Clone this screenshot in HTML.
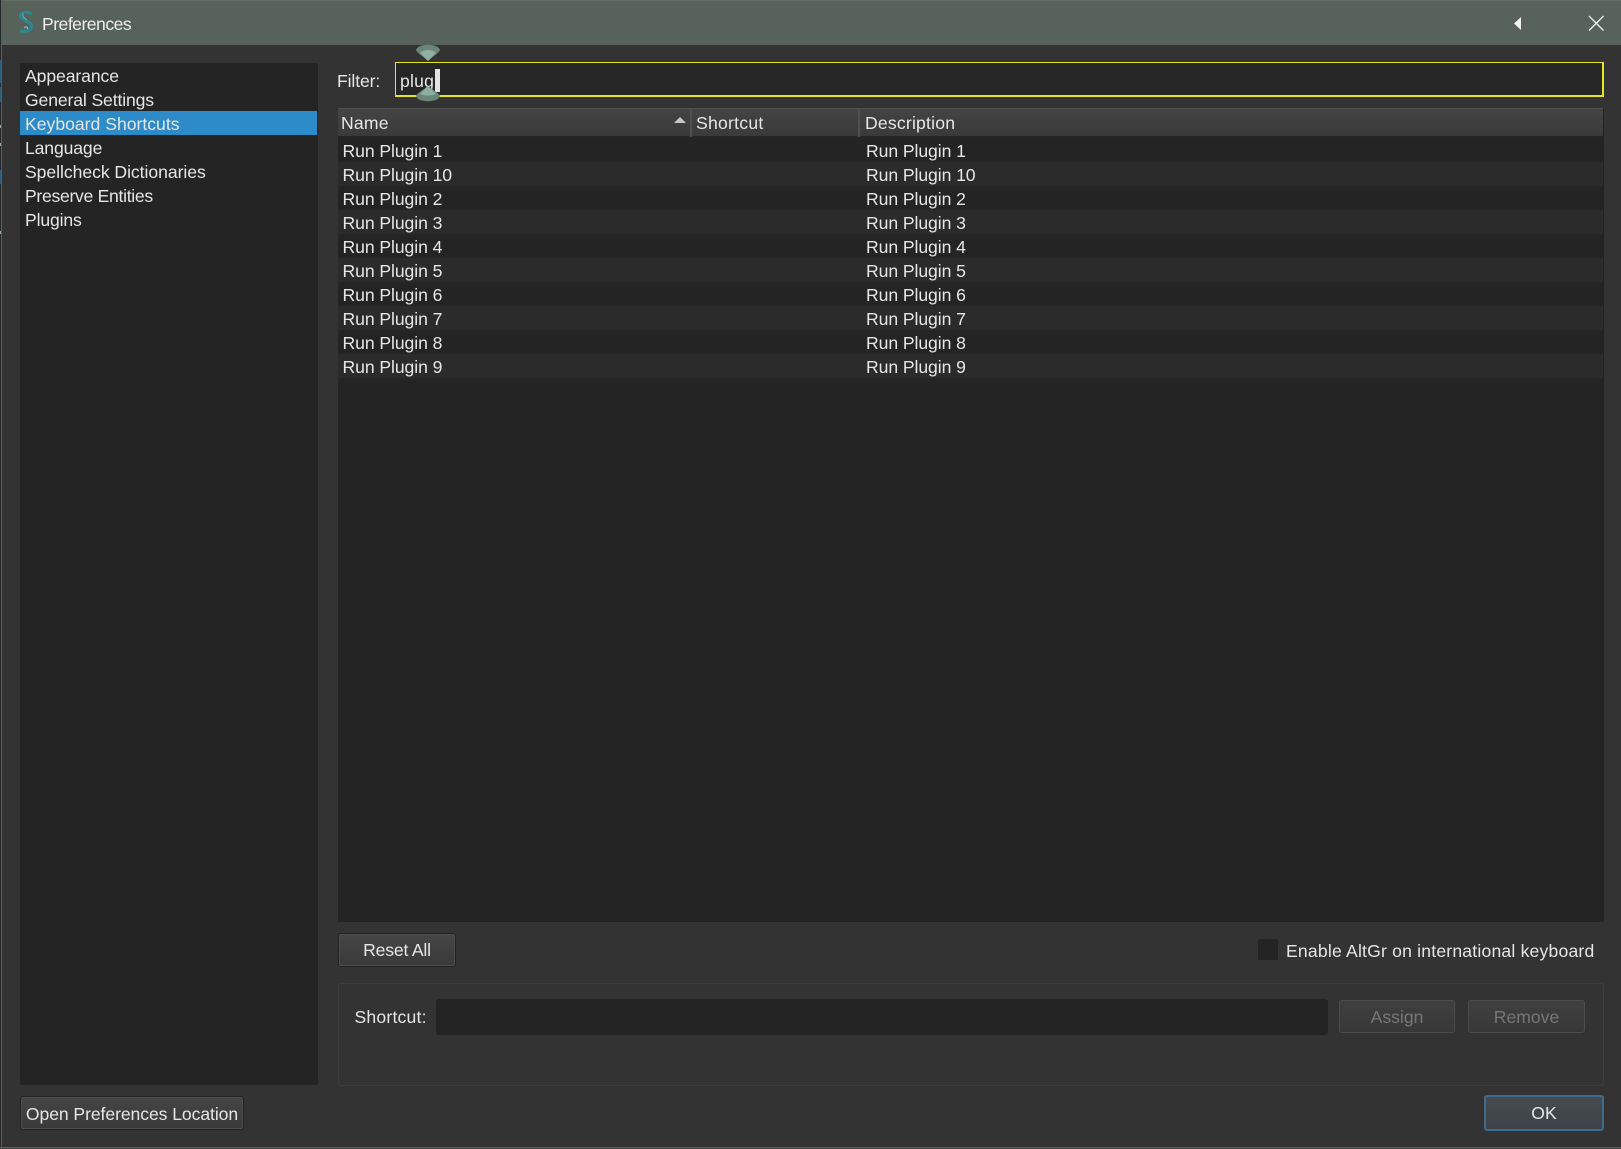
<!DOCTYPE html>
<html lang="en"><head><meta charset="utf-8"><title>Preferences</title>
<style>
html,body{margin:0;padding:0;background:#333}
body{width:1621px;height:1149px;position:relative;overflow:hidden;font-family:"Liberation Sans",sans-serif;font-size:17.6px;color:#e6e6e6}
.a{position:absolute;box-sizing:border-box}
.t{position:absolute;white-space:nowrap;line-height:24px;height:24px}
.r{letter-spacing:-.08px}
.btn{position:absolute;box-sizing:border-box;border:1px solid #222;border-radius:3px;background:linear-gradient(#454545,#3a3a3a);box-shadow:inset 0 0 0 1px #4e4e4e;text-align:center;color:#e6e6e6}
.dis{color:#767676;border-color:#4c4c4c;box-shadow:none;background:linear-gradient(#3f3f3f,#383838)}
.row{position:absolute;left:338px;width:1265px;height:24px}
</style></head><body>
<div class="a" style="left:0;top:0;width:1621px;height:1149px;background:#333"></div>
<div class="a" style="left:0;top:0;width:1px;height:1149px;background:#26292b"></div>
<div class="a" style="left:0;top:60px;width:1px;height:23px;background:#2a5a7c"></div>
<div class="a" style="left:0;top:87px;width:1px;height:15px;background:#2a5a7c"></div>
<div class="a" style="left:0;top:170px;width:1px;height:14px;background:#2a5a7c"></div>
<div class="a" style="left:0;top:125px;width:1px;height:3px;background:#9aa"></div>
<div class="a" style="left:0;top:143px;width:1px;height:3px;background:#9aa"></div>
<div class="a" style="left:0;top:231px;width:1px;height:3px;background:#9aa"></div>
<div class="a" style="left:1px;top:0;width:1px;height:1149px;background:#56625a"></div>
<div class="a" style="left:0;top:1147px;width:1621px;height:1px;background:#56625a"></div>
<div class="a" style="left:0;top:1148px;width:1621px;height:1px;background:#3d4540"></div>
<div class="a" style="left:1px;top:0;width:1620px;height:45px;background:#56625a"></div>
<div class="a" style="left:1px;top:0;width:1620px;height:1px;background:#626e66"></div>
<svg class="a" style="left:16px;top:10px" width="20" height="24" viewBox="0 0 20 24"><path d="M15.500 4.500 C13 1.500 6 1.500 4.500 5 C3 9.500 15.500 11 15.500 16.500 C15.500 21 8 22.500 4 20.500" fill="none" stroke="#2a8793" stroke-width="3"/><path d="M8 18 C10 16 12 17 11.500 19" fill="none" stroke="#7fc0c8" stroke-width="1.200"/><path d="M7 3.500 C6 7 9 8.500 11 10" fill="none" stroke="#5fb0ba" stroke-width="1"/></svg>
<div class="t" style="left:42px;top:12px;color:#eee;letter-spacing:-.52px">Preferences</div>
<svg class="a" style="left:1513px;top:15px" width="12" height="17" viewBox="0 0 12 17"><path d="M1 8.500 L8 2 V15 Z" fill="#f2f2f2"/></svg>
<svg class="a" style="left:1587px;top:14px" width="18" height="18" viewBox="0 0 18 18"><path d="M2 2 L16.500 16.500 M16.500 2 L2 16.500" stroke="#f0f0f0" stroke-width="1.300" fill="none"/></svg>

<div class="a" style="left:20px;top:63px;width:298px;height:1022px;background:#242424"></div>
<div class="a" style="left:20px;top:111px;width:297px;height:24px;background:#2e8bc9"></div>
<div class="t" style="left:25px;top:64px;letter-spacing:-.1px">Appearance</div>
<div class="t" style="left:25px;top:88px;letter-spacing:-.13px">General Settings</div>
<div class="t" style="left:25px;top:112px">Keyboard Shortcuts</div>
<div class="t" style="left:25px;top:136px;letter-spacing:-.13px">Language</div>
<div class="t" style="left:25px;top:160px;letter-spacing:-.05px">Spellcheck Dictionaries</div>
<div class="t" style="left:25px;top:184px;letter-spacing:-.3px">Preserve Entities</div>
<div class="t" style="left:25px;top:208px;letter-spacing:-.15px">Plugins</div>

<div class="t" style="left:337px;top:69px;letter-spacing:-.12px">Filter:</div>
<div class="a" style="left:395px;top:62px;width:1209px;height:35px;background:#262626;border:2px solid #e6e61e;border-width:1.500px 2px 2px 1.500px"></div>
<div class="t" style="left:400px;top:69px;letter-spacing:.2px">plug</div>
<div class="a" style="left:435px;top:69px;width:5px;height:23px;background:#e4e4e4"></div>
<svg class="a" style="left:415px;top:42px" width="26" height="20" viewBox="0 0 26 20"><path d="M1 8 C3 1 23 1 25 8 C24 11 18 14 13 19 C8 14 2 11 1 8Z" fill="#6b8578"/><path d="M5 11 C9 7 17 7 21 11 L13 19Z" fill="#8fb0a0"/></svg>
<svg class="a" style="left:415px;top:85px" width="26" height="19" viewBox="0 0 26 19"><path d="M13 1 C18 5 24 8 25 11 C23 18 3 18 1 11 C2 8 8 5 13 1Z" fill="#6b8578"/><path d="M13 1 L21 9 C17 11 9 11 5 9Z" fill="#8fb0a0"/></svg>

<div class="a" style="left:338px;top:108px;width:1266px;height:814px;background:#242424"></div>
<div class="a" style="left:338px;top:108px;width:1265px;height:29px;background:linear-gradient(#444,#3a3a3a);border-top:1px solid #505050;border-bottom:1px solid #262626"></div>
<div class="a" style="left:690px;top:108px;width:2px;height:29px;background:#505050"></div>
<div class="a" style="left:858px;top:108px;width:2px;height:29px;background:#505050"></div>
<div class="t" style="left:341px;top:111px;letter-spacing:.2px">Name</div>
<svg class="a" style="left:673px;top:116px" width="14" height="8" viewBox="0 0 14 8"><path d="M1 7 L7 1 L13 7Z" fill="#c8c8c8"/></svg>
<div class="t" style="left:696px;top:111px;letter-spacing:.25px">Shortcut</div>
<div class="t" style="left:865px;top:111px;letter-spacing:.2px">Description</div>

<div class="row" style="top:138px;background:#242424"></div>
<div class="row" style="top:162px;background:#2b2b2b"></div>
<div class="row" style="top:186px;background:#242424"></div>
<div class="row" style="top:210px;background:#2b2b2b"></div>
<div class="row" style="top:234px;background:#242424"></div>
<div class="row" style="top:258px;background:#2b2b2b"></div>
<div class="row" style="top:282px;background:#242424"></div>
<div class="row" style="top:306px;background:#2b2b2b"></div>
<div class="row" style="top:330px;background:#242424"></div>
<div class="row" style="top:354px;background:#2b2b2b"></div>

<div class="t r" style="left:342.500px;top:139px">Run Plugin 1</div><div class="t r" style="left:866px;top:139px">Run Plugin 1</div>
<div class="t r" style="left:342.500px;top:163px">Run Plugin 10</div><div class="t r" style="left:866px;top:163px">Run Plugin 10</div>
<div class="t r" style="left:342.500px;top:187px">Run Plugin 2</div><div class="t r" style="left:866px;top:187px">Run Plugin 2</div>
<div class="t r" style="left:342.500px;top:211px">Run Plugin 3</div><div class="t r" style="left:866px;top:211px">Run Plugin 3</div>
<div class="t r" style="left:342.500px;top:235px">Run Plugin 4</div><div class="t r" style="left:866px;top:235px">Run Plugin 4</div>
<div class="t r" style="left:342.500px;top:259px">Run Plugin 5</div><div class="t r" style="left:866px;top:259px">Run Plugin 5</div>
<div class="t r" style="left:342.500px;top:283px">Run Plugin 6</div><div class="t r" style="left:866px;top:283px">Run Plugin 6</div>
<div class="t r" style="left:342.500px;top:307px">Run Plugin 7</div><div class="t r" style="left:866px;top:307px">Run Plugin 7</div>
<div class="t r" style="left:342.500px;top:331px">Run Plugin 8</div><div class="t r" style="left:866px;top:331px">Run Plugin 8</div>
<div class="t r" style="left:342.500px;top:355px">Run Plugin 9</div><div class="t r" style="left:866px;top:355px">Run Plugin 9</div>

<div class="btn" style="left:338px;top:933px;width:118px;height:34px;line-height:33px;letter-spacing:-.2px">Reset All</div>
<div class="a" style="left:1258px;top:939px;width:20px;height:21px;background:#242424;border-radius:1px"></div>
<div class="t" style="left:1286px;top:939px;letter-spacing:.19px">Enable AltGr on international keyboard</div>

<div class="a" style="left:338px;top:983px;width:1266px;height:103px;border:1px solid #3d3d3d;border-radius:3px"></div>
<div class="t" style="left:354.500px;top:1005px;letter-spacing:.2px">Shortcut:</div>
<div class="a" style="left:436px;top:999px;width:892px;height:36px;background:#242424;border-radius:3px"></div>
<div class="btn dis" style="left:1339px;top:1000px;width:116px;height:33px;line-height:33px">Assign</div>
<div class="btn dis" style="left:1468px;top:1000px;width:117px;height:33px;line-height:33px">Remove</div>

<div class="btn" style="left:20px;top:1096px;width:224px;height:34px;line-height:34px;letter-spacing:-.08px">Open Preferences Location</div>
<div class="btn" style="left:1484px;top:1095px;width:120px;height:36px;line-height:33px;border:2px solid #3d6b8c;box-shadow:none;background:linear-gradient(#474c50,#3d4246)">OK</div>
</body></html>
